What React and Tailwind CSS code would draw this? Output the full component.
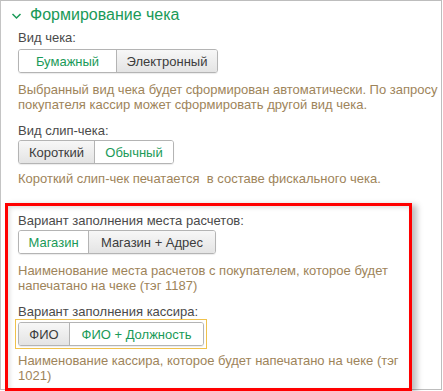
import React from "react";

const GREEN = "text-[#1a9a58]";

const Segments = ({ items, selected }) => (
  <div className="flex h-[24px] rounded-[3px] border border-[#b4b4b4] overflow-hidden shadow-[0_1px_1px_rgba(0,0,0,0.08)]">
    {items.map((it, i) => (
      <div
        key={it.label}
        className={
          "flex items-center justify-center text-[13px] leading-none " +
          (i > 0 ? "border-l border-[#b4b4b4] " : "") +
          (i === selected
            ? "bg-white text-[#1a9a58]"
            : "bg-gradient-to-b from-[#f7f7f7] to-[#e4e4e4] text-[#3c3c3c]")
        }
        style={{ width: it.w }}
      >
        {it.label}
      </div>
    ))}
  </div>
);

const Label = ({ children, className = "" }) => (
  <div className={"text-[13px] leading-[15px] text-[#4a4a4a] whitespace-nowrap " + className}>
    {children}
  </div>
);

const Hint = ({ children, className = "" }) => (
  <div className={"text-[13px] leading-[15px] text-[#9e845a] whitespace-pre " + className}>
    {children}
  </div>
);

export default function App() {
  return (
    <div className="w-[443px] h-[391px] bg-white overflow-hidden" style={{ fontFamily: '"Liberation Sans", Arial, sans-serif' }}>
      <div className="w-[442px] h-[390px] border border-[#bdbdbd] border-l-[#c4c4c4] flex flex-col">
        <div className="flex items-center h-[20px] mt-[4px] pl-[10px]">
          <svg width="11" height="8" viewBox="0 0 11 8" className="mr-[8px] mt-[1px]">
            <path d="M1.5 2 L5.5 6 L9.5 2" fill="none" stroke="#1a9a58" strokeWidth="1.5" />
          </svg>
          <span className={"text-[16px] leading-[20px] " + GREEN}>Формирование чека</span>
        </div>

        <div className="pl-[17px]">
          <Label className="mt-[5px]">Вид чека:</Label>
          <div className="flex mt-[4px]">
            <Segments items={[{ label: "Бумажный", w: 97 }, { label: "Электронный", w: 101 }]} selected={0} />
          </div>
          <Hint className="mt-[9px]">
            {"Выбранный вид чека будет сформирован автоматически. По запросу\nпокупателя кассир может сформировать другой вид чека."}
          </Hint>
          <Label className="mt-[11px]">Вид слип-чека:</Label>
          <div className="flex mt-[2px]">
            <Segments items={[{ label: "Короткий", w: 75 }, { label: "Обычный", w: 79 }]} selected={1} />
          </div>
          <Hint className="mt-[7px]">{"Короткий слип-чек печатается  в составе фискального чека."}</Hint>
        </div>

        <div className="mt-[17px] ml-[4px] w-[407px] border-[3px] border-[#ff0000] pl-[10px] pb-[5px] shadow-[inset_2px_2px_4px_rgba(0,0,0,0.12),5px_2px_6px_rgba(0,0,0,0.25)]">
          <Label className="mt-[7px]">Вариант заполнения места расчетов:</Label>
          <div className="flex mt-[2px]">
            <Segments items={[{ label: "Магазин", w: 69 }, { label: "Магазин + Адрес", w: 127 }]} selected={0} />
          </div>
          <Hint className="mt-[9px]">
            {"Наименование места расчетов с покупателем, которое будет\nнапечатано на чеке (тэг 1187)"}
          </Hint>
          <Label className="mt-[11px]">Вариант заполнения кассира:</Label>
          <div className="flex -ml-[3px]">
            <div className="border border-[#f0c24c] p-[2px]">
              <Segments items={[{ label: "ФИО", w: 50 }, { label: "ФИО + Должность", w: 134 }]} selected={1} />
            </div>
          </div>
          <Hint className="mt-[4px]">
            {"Наименование кассира, которое будет напечатано на чеке (тэг\n1021)"}
          </Hint>
        </div>
      </div>
    </div>
  );
}
